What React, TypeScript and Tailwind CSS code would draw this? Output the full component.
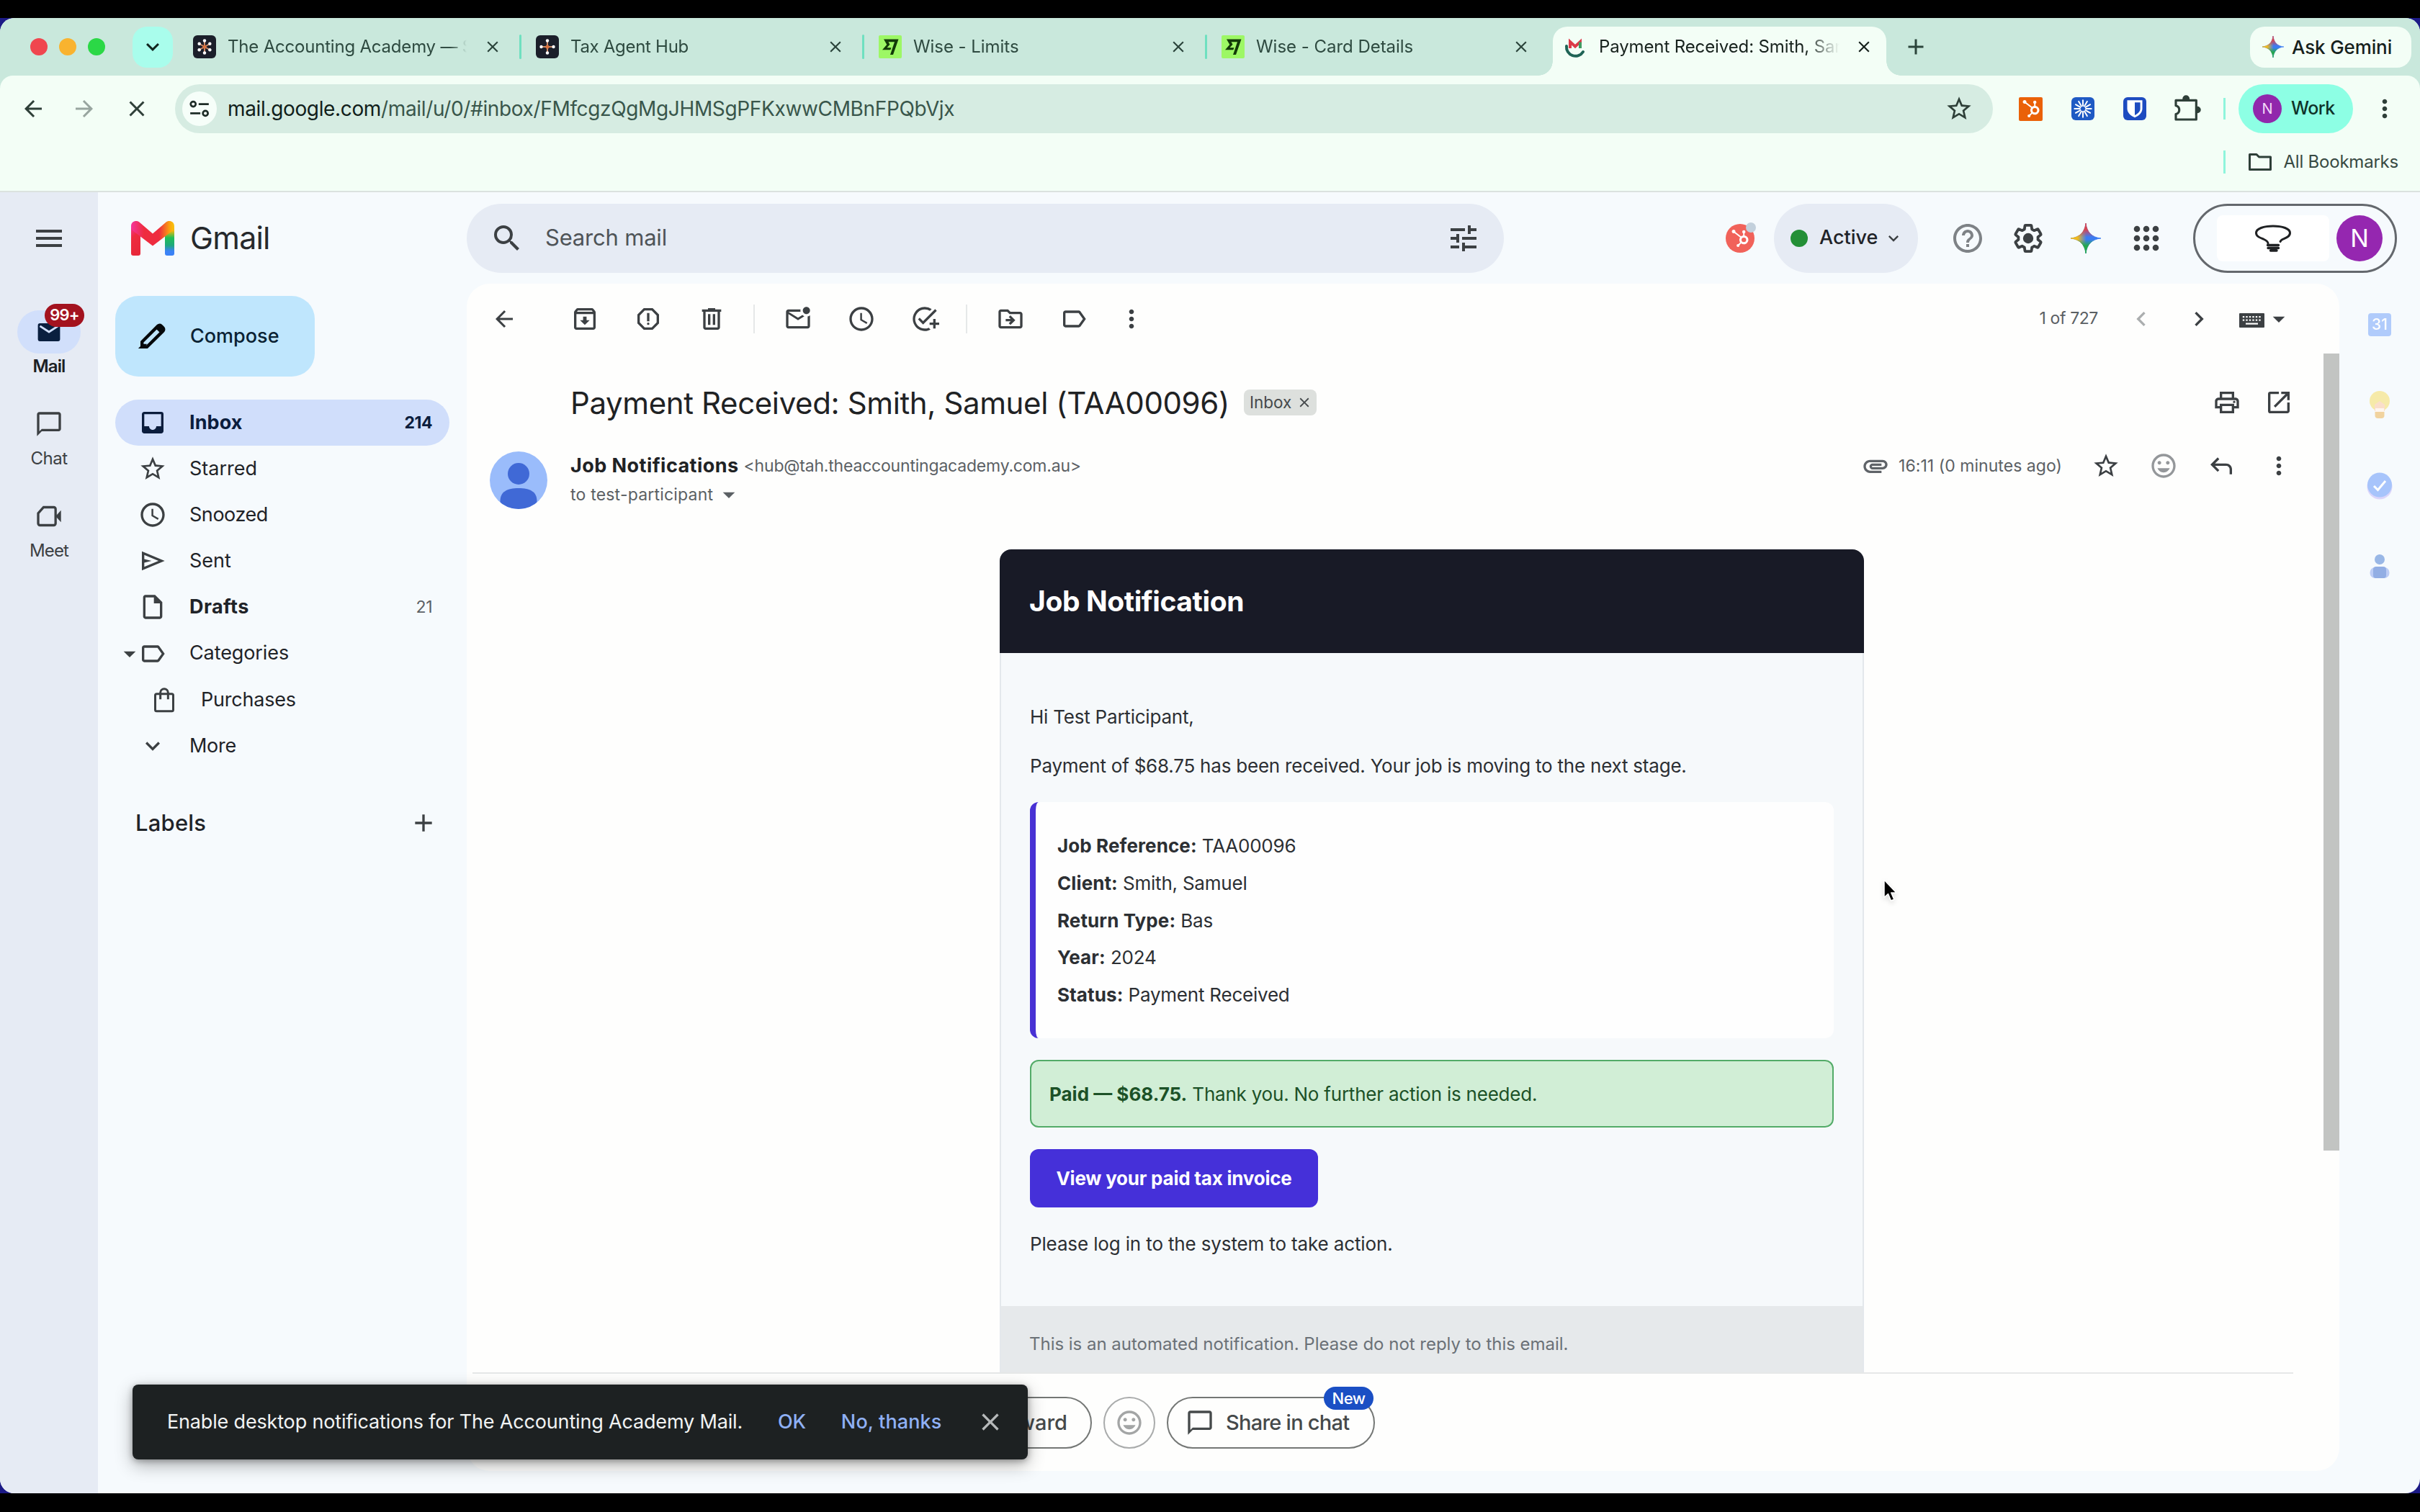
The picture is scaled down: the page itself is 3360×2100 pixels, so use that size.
import React from 'react';
import {
  MdAccessTime,
  MdAdd,
  MdAddTask,
  MdArrowBack,
  MdArrowDropDown,
  MdArrowForward,
  MdAttachment,
  MdChatBubbleOutline,
  MdChevronLeft,
  MdChevronRight,
  MdClose,
  MdExpandMore,
  MdHelpOutline,
  MdInbox,
  MdLabelOutline,
  MdMenu,
  MdMood,
  MdMoreVert,
  MdOpenInNew,
  MdOutlineArchive,
  MdOutlineDriveFileMove,
  MdOutlineInsertDriveFile,
  MdOutlineMarkEmailUnread,
  MdOutlinePrint,
  MdOutlineReport,
  MdSearch,
  MdStarBorder,
  MdTune,
} from 'react-icons/md';
import { SiHubspot } from 'react-icons/si';

/* ---------- drawn icons ---------- */

function Spark({ className, id }: { className: string; id: string }) {
  const star = 'M12 0C12.6 7 17 11.4 24 12C17 12.6 12.6 17 12 24C11.4 17 7 12.6 0 12C7 11.4 11.4 7 12 0Z';
  return (
    <svg viewBox="0 0 24 24" className={className}>
      <defs>
        <linearGradient id={id + 't'} x1="0" y1="0" x2="0" y2="1">
          <stop offset="0.2" stopColor="#d9434f" />
          <stop offset="0.46" stopColor="#d9434f" stopOpacity="0" />
        </linearGradient>
        <linearGradient id={id + 'l'} x1="0" y1="0" x2="1" y2="0">
          <stop offset="0.22" stopColor="#f3bb1c" />
          <stop offset="0.52" stopColor="#f3bb1c" stopOpacity="0" />
        </linearGradient>
        <linearGradient id={id + 'b'} x1="0" y1="1" x2="0" y2="0">
          <stop offset="0.25" stopColor="#23a94c" />
          <stop offset="0.46" stopColor="#23a94c" stopOpacity="0" />
        </linearGradient>
      </defs>
      <path d={star} fill="#3b7cf2" stroke="#3b7cf2" strokeWidth="0.5" />
      <path d={star} fill={`url(#${id}l)`} stroke={`url(#${id}l)`} strokeWidth="0.5" />
      <path d={star} fill={`url(#${id}t)`} stroke={`url(#${id}t)`} strokeWidth="0.5" />
      <path d={star} fill={`url(#${id}b)`} stroke={`url(#${id}b)`} strokeWidth="0.5" />
    </svg>
  );
}

function AgentFavicon({ rays }: { rays: number }) {
  const angles = Array.from({ length: rays }, (_, i) => (i * 2 * Math.PI) / rays - Math.PI / 2);
  return (
    <svg viewBox="0 0 32 32" className="size-8 shrink-0">
      <rect width="32" height="32" rx="6" fill="#1b1f2a" />
      {angles.map((a) => (
        <g key={a}>
          <line x1="16" y1="16" x2={16 + 8 * Math.cos(a)} y2={16 + 8 * Math.sin(a)} stroke="#c98a68" strokeWidth="2" />
          <circle cx={16 + 8.5 * Math.cos(a)} cy={16 + 8.5 * Math.sin(a)} r="2.2" fill="#fff" />
        </g>
      ))}
      <circle cx="16" cy="16" r="2.600" fill="#d9703c" />
    </svg>
  );
}

function WiseFavicon() {
  return (
    <svg viewBox="0 0 32 32" className="size-8 shrink-0">
      <rect width="32" height="32" rx="2" fill="#9df765" />
      <path d="M7 5.500h20.500l-7.500 21.500h-4L22 9.200h-8.500l2 3.600-4 4.500h6l-1.200 3H5l6.300-7.300z" fill="#123a08" />
    </svg>
  );
}

function GmailFavicon() {
  return (
    <svg viewBox="0 0 32 32" className="size-8 shrink-0">
      <path d="M9 18V9l7 6.500L23 9v9" fill="none" stroke="#dc3a48" strokeWidth="4" />
      <path d="M23 18v-8.500" stroke="#3f9b62" strokeWidth="4" />
      <path d="M4 15a12.500 12.500 0 0 0 23 8" fill="none" stroke="#1f6355" strokeWidth="4" strokeLinecap="round" />
    </svg>
  );
}

function GmailLogo() {
  return (
    <svg viewBox="0 0 60 48" className="h-12 w-[60px]">
      <defs>
        <linearGradient id="gmR" x1="0" y1="0" x2="0.3" y2="1">
          <stop offset="0" stopColor="#f5359b" />
          <stop offset="0.4" stopColor="#ee2c3f" />
          <stop offset="1" stopColor="#e8283a" />
        </linearGradient>
        <linearGradient id="gmB" x1="0" y1="0" x2="0" y2="1">
          <stop offset="0.15" stopColor="#f8b70f" />
          <stop offset="0.4" stopColor="#1fbf56" />
          <stop offset="0.65" stopColor="#1ea97c" />
          <stop offset="0.85" stopColor="#3b82f6" />
        </linearGradient>
        <linearGradient id="gmV" x1="0" y1="0" x2="1" y2="0">
          <stop offset="0" stopColor="#f5359b" />
          <stop offset="0.3" stopColor="#ee2c3f" />
          <stop offset="0.65" stopColor="#ee2c3f" />
          <stop offset="0.9" stopColor="#fba60d" />
          <stop offset="1" stopColor="#f8c50f" />
        </linearGradient>
      </defs>
      <path d="M0 7h13v38a3 3 0 0 1-3 3H3a3 3 0 0 1-3-3z" fill="url(#gmR)" />
      <path d="M47 7h13v38a3 3 0 0 1-3 3h-7a3 3 0 0 1-3-3z" fill="url(#gmB)" />
      <path
        d="M0 7C0 0.500 7.500-2 12 2L30 17.500 48 2C52.500-2 60 0.500 60 7C60 10.500 58 13 55.500 15L30 34.500 4.500 15C2 13 0 10.500 0 7Z"
        fill="url(#gmV)"
      />
    </svg>
  );
}

function Gear() {
  return (
    <svg viewBox="0 0 24 24" className="size-12">
      <path
        d="M19.430 12.980c.04-.32.07-.64.07-.98 0-.34-.03-.66-.07-.98l2.110-1.650c.19-.15.24-.42.12-.64l-2-3.460a.5.5 0 0 0-.61-.22l-2.490 1c-.52-.4-1.080-.73-1.690-.98l-.38-2.650A.488.488 0 0 0 14 2h-4c-.25 0-.46.18-.49.42l-.38 2.650c-.61.25-1.170.59-1.690.98l-2.490-1a.5.5 0 0 0-.61.22l-2 3.460c-.13.22-.07.49.12.64l2.110 1.650c-.04.32-.07.65-.07.98 0 .33.03.66.07.98l-2.110 1.650c-.19.15-.24.42-.12.64l2 3.460a.5.5 0 0 0 .61.22l2.490-1c.52.4 1.080.73 1.690.98l.38 2.650c.03.24.24.42.49.42h4c.25 0 .46-.18.49-.42l.38-2.650c.61-.25 1.170-.59 1.690-.98l2.490 1a.5.5 0 0 0 .61-.22l2-3.460c.12-.22.07-.49-.12-.64z"
        fill="none"
        stroke="#3c4043"
        strokeWidth="2.100"
        strokeLinejoin="round"
        transform="translate(1.100 1.100) scale(.908)"
      />
      <circle cx="12" cy="12" r="3.600" fill="#3c4043" />
    </svg>
  );
}

function AppsGrid() {
  return (
    <svg viewBox="0 0 40 40" className="size-10 fill-[#3c4043]">
      {[7, 20, 33].map((x) => [7, 20, 33].map((y) => <circle key={x + '-' + y} cx={x} cy={y} r="4.300" />))}
    </svg>
  );
}

function IdeaBulb() {
  return (
    <svg viewBox="0 0 52 38" className="h-[38px] w-[52px]" fill="none" stroke="#1f2123" strokeWidth="3" strokeLinecap="round">
      <path d="M19 26C19 23.500 17 22 12.500 20C7 17.800 2.500 16 2.500 11.500C2.500 5.500 13 2 26 2S49.500 5.500 49.500 11.500C49.500 17 43 18.800 39 20.500Q37 21.500 36 23.500" />
      <path d="M18.500 28.500h15M19 32.500h14.500M22.500 36h8.500" strokeWidth="3.400" />
    </svg>
  );
}

function Trash() {
  return (
    <svg viewBox="0 0 24 24" className="size-10 fill-current">
      <path d="M15 4V3H9v1H4v2h1v13c0 1.100.9 2 2 2h10c1.100 0 2-.9 2-2V6h1V4h-5zm2 15H7V6h10v13zM9 8h2v9H9zm4 0h2v9h-2z" />
    </svg>
  );
}

function KeyboardIcon() {
  const cols = [6, 10.5, 15, 19.5, 24, 28.5];
  return (
    <svg viewBox="0 0 35 20" className="h-5 w-[35px]">
      <rect width="35" height="20" rx="1" fill="#3c4043" />
      {cols.map((x) => (
        <g key={x} fill="#fefefd">
          <rect x={x - 1.200} y="4" width="2.400" height="2.200" />
          <rect x={x - 1.200} y="8.500" width="2.400" height="2.200" />
        </g>
      ))}
      <rect x="9" y="13.500" width="17" height="2.200" fill="#fefefd" />
    </svg>
  );
}

function ReplyArrow() {
  return (
    <svg viewBox="0 0 24 24" className="size-10 fill-current">
      <path d="M19 19v-4c0-.83-.29-1.540-.88-2.130C17.540 12.290 16.830 12 16 12H6.800l3.600 3.600L9 17l-6-6 6-6 1.400 1.400L6.800 10H16c1.380 0 2.560.49 3.540 1.460C20.510 12.440 21 13.620 21 15v4h-2z" />
    </svg>
  );
}

function SendOutline() {
  return (
    <svg viewBox="0 0 24 24" className="size-10 fill-current">
      <path d="M3 20V4l19 8-19 8zm2-3l11.850-5L5 7v3.500l6 1.500-6 1.500V17z" />
    </svg>
  );
}

function ShoppingBag() {
  return (
    <svg viewBox="0 0 24 24" className="size-10" fill="none" stroke="currentColor" strokeWidth="1.800">
      <rect x="4.500" y="7" width="15" height="14.500" rx="1.200" />
      <path d="M8.800 11.500V6a3.200 3.200 0 0 1 6.400 0v5.500" />
    </svg>
  );
}

function VideoCam() {
  return (
    <svg viewBox="0 0 24 24" className="size-10" fill="none" stroke="currentColor" strokeWidth="2">
      <path d="M3 9.500L7.500 4.500H16a1.500 1.500 0 0 1 1.500 1.500v12A1.500 1.500 0 0 1 16 19.500H4.500A1.500 1.500 0 0 1 3 18z" />
      <path d="M17.500 12L22 7v10z" fill="currentColor" stroke="none" />
    </svg>
  );
}

function ComposePencil() {
  return (
    <svg viewBox="0 0 24 24" className="size-12">
      <path
        d="M5.500 18.500h-.9v-2.600L15.700 4.800a1.500 1.500 0 0 1 2.100 0l1.400 1.400a1.500 1.500 0 0 1 0 2.100L8 19.400H4.600z"
        fill="none"
        stroke="#06090b"
        strokeWidth="2.200"
      />
      <path d="M14 6.500l3-3 3.500 3.500-3 3z" fill="#06090b" />
    </svg>
  );
}

/* ---------- browser chrome ---------- */

const tabs = [
  { title: 'The Accounting Academy — S', icon: <AgentFavicon rays={6} />, tracking: 'tracking-[-0.2px]' },
  { title: 'Tax Agent Hub', icon: <AgentFavicon rays={4} />, tracking: 'tracking-[-0.3px]' },
  { title: 'Wise - Limits', icon: <WiseFavicon />, tracking: 'tracking-[-0.05px]' },
  { title: 'Wise - Card Details', icon: <WiseFavicon />, tracking: 'tracking-[-0.03px]' },
];

function TabStrip() {
  return (
    <div className="flex h-20 items-center bg-[#c9e8dc] pl-[42px]">
      <div className="flex gap-4">
        <span className="size-6 rounded-full bg-[#f0464f]" />
        <span className="size-6 rounded-full bg-[#f9b32f]" />
        <span className="size-6 rounded-full bg-[#2bd846]" />
      </div>
      <div className="ml-[38px] flex h-[57px] w-14 items-center justify-center rounded-[20px] bg-[#a9fdec]">
        <MdExpandMore className="size-9 text-[#10241d]" />
      </div>
      <div className="ml-7 flex">
        {tabs.map((t, i) => (
          <div key={t.title} className="flex w-[476px] items-center text-2xl text-[#2e4a40]">
            {t.icon}
            <span
              className={`ml-4 w-[332px] overflow-hidden whitespace-nowrap [mask-image:linear-gradient(to_right,#000_93%,transparent_100%)] ${t.tracking}`}
            >
              {t.title}
            </span>
            <MdClose className="ml-[23px] size-[26px] text-[#2b443b]" />
            {i < 3 && <span className="ml-6 h-[34px] w-[3px] rounded bg-[#6fe0c0]" />}
          </div>
        ))}
      </div>
      <div className="relative -ml-[16px] flex h-[68px] w-[463px] items-center self-end rounded-t-[20px] bg-[#f3fef6] pb-3 pl-[15px] text-2xl text-[#16211c]">
        <span className="absolute bottom-0 -left-5 size-5 bg-[radial-gradient(circle_at_0_0,transparent_19.5px,#f3fef6_20px)]" />
        <span className="absolute -right-5 bottom-0 size-5 bg-[radial-gradient(circle_at_100%_0,transparent_19.5px,#f3fef6_20px)]" />
        <GmailFavicon />
        <span className="ml-[17px] w-[334px] overflow-hidden tracking-[-0.12px] whitespace-nowrap [mask-image:linear-gradient(to_right,#000_86%,transparent_100%)]">
          Payment Received: Smith, Samuel
        </span>
        <MdClose className="ml-[21px] size-[26px] text-[#16211c]" />
      </div>
      <MdAdd className="ml-[23px] size-9 text-[#2b443b]" />
      <div className="mr-3 ml-auto flex h-[57px] w-56 items-center rounded-[20px] bg-[#f3fef6] pl-[17px]">
        <Spark id="ask" className="size-[30px]" />
        <span className="ml-[11px] text-[26px] font-medium tracking-[-0.13px] whitespace-nowrap text-[#16211c]">Ask Gemini</span>
      </div>
    </div>
  );
}

function Toolbar() {
  return (
    <div className="flex h-[92px] items-center rounded-t-[18px] bg-[#f3fef6] pl-[28px] text-[#2e3f38]">
      <MdArrowBack className="size-9" />
      <MdArrowForward className="ml-[35px] size-9 text-[#98a59f]" />
      <MdClose className="ml-[37px] size-9" />
      <div className="ml-[35px] flex h-[68px] w-[2524px] items-center rounded-full bg-[#d6ece2]">
        <span className="ml-2.5 flex size-12 items-center justify-center rounded-full bg-[#f6fef9]">
          <svg viewBox="0 0 24 24" className="size-7" fill="none" stroke="#1d2b26" strokeWidth="2.300">
            <circle cx="4.500" cy="6.500" r="3" />
            <path d="M11 6.500h12M1 17.500h12" />
            <circle cx="19" cy="17.500" r="3" />
          </svg>
        </span>
        <span className="ml-[15px] text-[28px] tracking-[-0.35px] whitespace-nowrap text-[#39564b]">
          <span className="text-[#10201a]">mail.google.com</span>/mail/u/0/#inbox/FMfcgzQgMgJHMSgPFKxwwCMBnFPQbVjx
        </span>
        <MdStarBorder className="mr-[27px] ml-auto size-10" />
      </div>
      <span className="ml-9 flex size-[33px] items-center justify-center rounded-xs bg-[#ea6108]">
        <SiHubspot className="size-6 text-white" />
      </span>
      <span className="ml-10 flex size-8 items-center justify-center rounded-md bg-[#1f5ac4]">
        <svg viewBox="0 0 24 24" className="size-7" stroke="#fff" strokeWidth="1.700" strokeLinecap="round">
          {Array.from({ length: 12 }, (_, i) => (
            <line key={i} x1="12" y1="2" x2="12" y2="8.500" transform={`rotate(${i * 30} 12 12)`} />
          ))}
        </svg>
      </span>
      <span className="ml-10 flex size-8 items-center justify-center rounded-md bg-[#1d4bc0]">
        <svg viewBox="0 0 24 24" className="size-7">
          <path d="M3 2h18v10c0 5-4.500 8.500-9 10.500C7.500 20.500 3 17 3 12z" fill="#fff" />
          <path d="M12 4.500h6.500V12c0 3.500-3 6-6.500 7.800z" fill="#1d4bc0" />
        </svg>
      </span>
      <svg viewBox="0 0 24 24" className="ml-9 size-10" fill="none" stroke="currentColor" strokeWidth="1.900" strokeLinejoin="round">
        <path d="M3 5h17v16H3v-4.500c3.800-1 3.800-6 0-7z" />
        <path d="M9.500 5V3.700a2 2 0 0 1 4 0V5zM20.500 11h.5a1.800 1.800 0 0 1 0 3.800h-.5z" fill="currentColor" />
      </svg>
      <span className="ml-[31px] h-[30px] w-[3px] bg-[#8ff5dc]" />
      <div className="ml-[18px] flex h-[68px] w-[159px] items-center rounded-full bg-[#8dffe4] pl-5">
        <span className="flex size-10 items-center justify-center rounded-full bg-[#9127ac] text-[20px] text-[#f3d9f8]">N</span>
        <span className="ml-[13px] text-[25px] font-medium tracking-[-0.6px] text-[#0f3329]">Work</span>
      </div>
      <MdMoreVert className="ml-6 size-10" />
    </div>
  );
}

function BookmarksBar() {
  return (
    <div className="flex h-[70px] items-start justify-end border-b-2 border-[#dbe2df] bg-[#f3fef6] pt-3 pr-[30px] text-[#2e3f38]">
      <div className="flex h-8 items-center">
        <span className="h-8 w-[3px] bg-[#8ff5dc]" />
        <svg viewBox="0 0 32 26" className="ml-8 h-[26px] w-8" fill="none" stroke="currentColor" strokeWidth="3" strokeLinejoin="round">
          <path d="M1.500 23.500V2.500h9.500l3.500 3.500h16v17.500z" />
        </svg>
        <span className="ml-[17px] text-2xl tracking-[-0.22px] whitespace-nowrap text-[#384a43]">All Bookmarks</span>
      </div>
    </div>
  );
}

/* ---------- mail app ---------- */

function AppRail() {
  return (
    <nav className="flex w-[136px] shrink-0 flex-col items-center bg-[#e6ebf4] text-2xl text-[#3c4043]">
      <div className="flex h-32 items-center">
        <MdMenu className="size-12" />
      </div>
      <div className="mt-[36px] flex w-full flex-col items-center">
        <div className="relative flex h-[60px] w-[88px] items-center justify-center rounded-full bg-[#d1dffb]">
          <svg viewBox="0 0 32 26" className="h-[25px] w-8">
            <rect width="32" height="26" rx="3" fill="#0a1f3f" />
            <path d="M3 4l13 8.500L29 4" fill="none" stroke="#d1dffb" strokeWidth="3" />
          </svg>
          <span className="absolute -top-[9px] left-[38px] flex h-8 w-[55px] items-center justify-center rounded-full bg-[#a3121f] text-[22px] font-semibold tracking-[-0.8px] text-white">
            99+
          </span>
        </div>
        <span className="flex h-9 items-center font-semibold tracking-[-0.87px] text-[#1c2024]">Mail</span>
      </div>
      <div className="mt-8 flex flex-col items-center">
        <span className="flex h-[60px] items-center">
          <MdChatBubbleOutline className="size-10" />
        </span>
        <span className="flex h-9 items-center tracking-[-0.5px]">Chat</span>
      </div>
      <div className="mt-8 flex flex-col items-center">
        <span className="flex h-[60px] items-center">
          <VideoCam />
        </span>
        <span className="flex h-9 items-center tracking-[-0.85px]">Meet</span>
      </div>
    </nav>
  );
}

function FolderRow({
  icon,
  label,
  count,
  bold,
  active,
  tracking,
}: {
  icon: React.ReactNode;
  label: string;
  count?: string;
  bold?: boolean;
  active?: boolean;
  tracking: string;
}) {
  return (
    <div className={`flex h-16 items-center rounded-full pr-6 pl-8 ${active ? 'bg-[#d0defb] text-[#0b1d3d]' : 'text-[#3c4043]'}`}>
      {icon}
      <span className={`ml-[31px] text-[27px] ${tracking} ${bold ? 'font-bold' : ''} ${active ? '' : 'text-[#1f2328]'}`}>{label}</span>
      {count && (
        <span className={`ml-auto text-[23px] tracking-[-0.5px] ${active ? 'font-bold' : 'text-[#5b6065]'}`}>{count}</span>
      )}
    </div>
  );
}

function Sidebar() {
  return (
    <aside className="w-[512px] shrink-0 pl-6">
      <div className="mt-[17px] flex h-28 w-[277px] items-center rounded-[32px] bg-[#bfe6fd] pl-7">
        <ComposePencil />
        <span className="ml-[28px] text-[27px] font-medium tracking-[0px] text-[#0a2233]">Compose</span>
      </div>
      <div className="mt-8 w-[464px]">
        <FolderRow icon={<MdInbox className="size-10" />} label="Inbox" count="214" bold active tracking="tracking-[0.1px]" />
        <FolderRow icon={<MdStarBorder className="size-10" />} label="Starred" tracking="tracking-[0px]" />
        <FolderRow icon={<MdAccessTime className="size-10" />} label="Snoozed" tracking="tracking-[-0.45px]" />
        <FolderRow icon={<SendOutline />} label="Sent" tracking="tracking-[0px]" />
        <FolderRow icon={<MdOutlineInsertDriveFile className="size-10" />} label="Drafts" count="21" bold tracking="tracking-[0.4px]" />
        <div className="flex h-[65px] items-center text-[#3c4043]">
          <MdArrowDropDown className="size-10 -mr-1" />
          <MdLabelOutline className="-ml-1 size-10" />
          <span className="ml-[31px] text-[27px] tracking-[-0.1px] text-[#1f2328]">Categories</span>
        </div>
        <div className="flex h-16 items-center pl-12 text-[#3c4043]">
          <ShoppingBag />
          <span className="ml-[31px] text-[27px] tracking-[-0.2px] text-[#1f2328]">Purchases</span>
        </div>
        <FolderRow icon={<MdExpandMore className="size-10" />} label="More" tracking="tracking-[-0.3px]" />
      </div>
      <div className="mt-[43px] flex h-16 w-[448px] items-center justify-between pl-7 text-[#1f2328]">
        <span className="text-[31px] font-medium tracking-[0.2px]">Labels</span>
        <MdAdd className="size-10 text-[#3c4043]" />
      </div>
    </aside>
  );
}

function AppHeader() {
  return (
    <header className="flex h-[127px] items-center">
      <div className="flex w-[512px] items-center pl-[46px]">
        <GmailLogo />
        <span className="ml-[22px] text-[43px] tracking-[-0.8px] text-[#26292c]">Gmail</span>
      </div>
      <div className="flex h-24 w-[1440px] items-center rounded-full bg-[#e6ebf4] pl-8 text-[#3c4043]">
        <MdSearch className="size-12" />
        <span className="ml-[29px] text-[31px] tracking-[-0.2px] text-[#4f5458]">Search mail</span>
        <MdTune className="mr-8 ml-auto size-12" />
      </div>
      <span className="relative ml-[308px] flex size-10 items-center justify-center rounded-full bg-[#f1625a]">
        <SiHubspot className="size-6 text-white" />
        <span className="absolute -top-0.5 -right-0.5 size-3.5 rounded-full bg-[#c3d0dc]" />
      </span>
      <div className="ml-[27px] flex h-24 w-[200px] items-center rounded-full bg-[#e6ebf4] pl-[23px]">
        <span className="size-6 rounded-full bg-[#238f36]" />
        <span className="ml-4 text-[27px] font-medium tracking-[0px] text-[#1f2328]">Active</span>
        <MdExpandMore className="ml-2 size-7 text-[#3c4043]" />
      </div>
      <MdHelpOutline className="ml-[45px] size-12 text-[#7e8286]" />
      <span className="ml-9">
        <Gear />
      </span>
      <Spark id="hdr" className="ml-[35px] size-[42px]" />
      <span className="ml-[43px]">
        <AppsGrid />
      </span>
      <div className="ml-[45px] flex h-24 w-[283px] items-center rounded-full border-[3px] border-[#64686d] pl-[30px]">
        <span className="flex h-16 w-[156px] items-center justify-center rounded-lg bg-white">
          <IdeaBulb />
        </span>
        <span className="ml-[10px] flex size-16 items-center justify-center rounded-full bg-[#9527b0] text-[34px] text-white">N</span>
      </div>
    </header>
  );
}

function MessageToolbar() {
  return (
    <div className="flex h-[97px] shrink-0 items-center pr-16 pl-8 text-[#3c4043]">
      <MdArrowBack className="size-10 p-0.5" />
      <MdOutlineArchive className="ml-[72px] size-10" />
      <MdOutlineReport className="ml-12 size-10" />
      <span className="ml-12">
        <Trash />
      </span>
      <span className="ml-[38px] h-10 w-0.5 bg-[#e6e8e8]" />
      <MdOutlineMarkEmailUnread className="ml-10 size-10" />
      <MdAccessTime className="ml-12 size-10" />
      <MdAddTask className="ml-12 size-10" />
      <span className="ml-[37px] h-10 w-0.5 bg-[#e6e8e8]" />
      <MdOutlineDriveFileMove className="ml-10 size-10" />
      <MdLabelOutline className="ml-12 size-10" />
      <MdMoreVert className="ml-10 size-10" />
      <span className="ml-auto text-[23px] tracking-[-0.4px] text-[#5b6064]">1 of 727</span>
      <MdChevronLeft className="ml-10 size-10 text-[#abaeaf]" />
      <MdChevronRight className="ml-10 size-10" />
      <span className="mt-[5px] ml-9">
        <KeyboardIcon />
      </span>
      <MdArrowDropDown className="size-10" />
    </div>
  );
}

function SenderRow() {
  return (
    <div className="flex h-20 pr-[42px] pl-8">
      <svg viewBox="0 0 80 80" className="size-20 shrink-0">
        <clipPath id="avatarClip">
          <circle cx="40" cy="40" r="40" />
        </clipPath>
        <g clipPath="url(#avatarClip)">
          <rect width="80" height="80" fill="#9abcfb" />
          <circle cx="40" cy="31" r="15" fill="#4069d6" />
          <path d="M14.500 80V69C14.500 56 24 51 40 51S65.500 56 65.500 69V80Z" fill="#4069d6" />
        </g>
      </svg>
      <div className="ml-8 flex flex-col">
        <div className="flex h-10 items-center whitespace-nowrap">
          <span className="text-[27px] font-bold tracking-[0.45px] text-[#1f2224]">Job Notifications</span>
          <span className="ml-[7px] text-[23px] tracking-[-0.2px] text-[#5b6064]">&lt;hub@tah.theaccountingacademy.com.au&gt;</span>
        </div>
        <div className="flex h-10 items-center text-[23px] tracking-[0.2px] whitespace-nowrap text-[#5b6064]">
          to test-participant
          <MdArrowDropDown className="ml-0.5 size-10" />
        </div>
      </div>
      <div className="ml-auto flex h-10 items-center text-[#3c4043]">
        <MdAttachment className="size-10 text-[#5f6368]" />
        <span className="ml-[12px] text-[23px] tracking-[0.05px] whitespace-nowrap text-[#5b6064]">16:11 (0 minutes ago)</span>
        <MdStarBorder className="ml-[41px] size-10" />
        <MdMood className="ml-10 size-10 text-[#94979a]" />
        <span className="ml-10">
          <ReplyArrow />
        </span>
        <MdMoreVert className="ml-10 size-10" />
      </div>
    </div>
  );
}

const details = [
  ['Job Reference:', 'TAA00096'],
  ['Client:', 'Smith, Samuel'],
  ['Return Type:', 'Bas'],
  ['Year:', '2024'],
  ['Status:', 'Payment Received'],
];

function EmailCard() {
  return (
    <div className="mt-14 ml-[740px] w-[1200px] text-[26px] tracking-[-0.22px] text-[#2c2f33]">
      <div className="flex h-36 items-center rounded-t-2xl bg-[#181a26] pl-[41px] text-[39px] font-bold tracking-[-0.4px] text-white">
        Job Notification
      </div>
      <div className="h-[907px] border-x-2 border-[#e4e8ec] bg-[#f6f9fb] px-10 pt-[68px]">
        <p className="h-[42px] leading-[42px]">Hi Test Participant,</p>
        <p className="mt-[26px] h-[42px] leading-[42px] whitespace-nowrap">
          Payment of $68.75 has been received. Your job is moving to the next stage.
        </p>
        <div className="mt-[29px] h-[328px] rounded-xl border-l-8 border-[#4831d4] bg-[#fefefe] pt-[35px] pl-[30px]">
          {details.map(([k, v]) => (
            <p key={k} className="h-[51.75px] leading-[51.75px]">
              <b className="tracking-[0.1px]">{k}</b> {v}
            </p>
          ))}
        </div>
        <div className="mt-[30px] flex h-[94px] items-center rounded-xl border-2 border-[#53ab68] bg-[#d1eed6] pl-[25px] whitespace-pre text-[#1c5127]">
          <b className="tracking-[0px]">Paid — $68.75.</b> Thank you. No further action is needed.
        </div>
        <div className="mt-[30px] flex h-[81px] w-[400px] items-center justify-center rounded-xl bg-[#4530d9] font-bold whitespace-nowrap text-white">
          View your paid tax invoice
        </div>
        <p className="mt-[30px] h-[42px] leading-[42px] tracking-[-0.14px]">Please log in to the system to take action.</p>
      </div>
      <div className="h-[110px] border-x-2 border-[#e4e8ec] bg-[#e6e9eb] pt-[33px] pl-[39px] text-2xl leading-10 tracking-[-0.02px] text-[#6b7177]">
        This is an automated notification. Please do not reply to this email.
      </div>
    </div>
  );
}

function MessagePane() {
  return (
    <main className="flex h-[1649px] w-[2600px] flex-col overflow-hidden rounded-[32px] bg-[#fefefd]">
      <MessageToolbar />
      <div className="flex h-[1415px] shrink-0 overflow-hidden">
        <div className="w-[2578px]">
          <div className="flex h-[136px] items-center pr-[42px] pl-36 text-[#3c4043]">
            <h1 className="text-[42px] tracking-[-0.38px] whitespace-nowrap text-[#1f2224]">
              Payment Received: Smith, Samuel (TAA00096)
            </h1>
            <span className="ml-5 flex h-9 w-[101px] items-center rounded-lg bg-[#dde0dd] pl-2 text-[22.500px] text-[#45494b]">
              Inbox
              <MdClose className="ml-[7px] size-[22px]" />
            </span>
            <MdOutlinePrint className="ml-auto size-10" />
            <MdOpenInNew className="ml-8 size-10" />
          </div>
          <SenderRow />
          <EmailCard />
        </div>
        <div className="h-[1107px] w-[22px] bg-[#c2c4c2]" />
      </div>
      <div className="mr-16 ml-2 h-0.5 shrink-0 bg-[#e6e8e8]" />
      <div className="mt-8 flex h-[72px] text-[29px] font-medium text-[#45494a]">
        <div className="ml-[630px] flex w-[238px] items-center justify-end rounded-full border-2 border-[#747775] pr-8">Forward</div>
        <div className="ml-4 flex w-[72px] items-center justify-center rounded-full border-2 border-[#a9abab]">
          <MdMood className="size-10 text-[#a3a5a5]" />
        </div>
        <div className="relative ml-4 flex w-[289px] items-center rounded-full border-2 border-[#747775] pl-6">
          <MdChatBubbleOutline className="size-10" />
          <span className="ml-[16px] tracking-[-0.75px] whitespace-nowrap">Share in chat</span>
          <span className="absolute -top-4 right-0 flex h-8 w-[69px] items-center justify-center rounded-full bg-[#1a4fc4] text-[22px] font-medium tracking-[-0.5px] text-white">
            New
          </span>
        </div>
      </div>
    </main>
  );
}

function SidePanel() {
  return (
    <aside className="flex w-28 flex-col items-center gap-[72px] pt-[37px] opacity-90">
      <span className="flex size-10 items-center justify-center">
        <span className="flex size-8 items-center justify-center rounded-sm bg-[#a9c6fb] text-[21px] font-medium text-white">31</span>
      </span>
      <svg viewBox="0 0 40 40" className="size-10">
        <circle cx="20" cy="14" r="14" fill="#f7e9a0" />
        <path d="M13 19l7-5 7 5v9H13z" fill="#fbdcc5" />
        <rect x="14" y="24" width="12" height="5" fill="#fff6ee" />
        <path d="M13.500 29h13v5a4 4 0 0 1-4 4h-5a4 4 0 0 1-4-4z" fill="#f1cf95" />
      </svg>
      <svg viewBox="0 0 40 40" className="size-10">
        <circle cx="20" cy="21" r="17.500" fill="#d9d2fa" />
        <circle cx="20" cy="18.500" r="17" fill="#9fbffb" />
        <path d="M12 20l5.500 5.500L28 13" fill="none" stroke="#fff" strokeWidth="3" />
      </svg>
      <svg viewBox="0 0 40 40" className="size-10">
        <circle cx="20" cy="10" r="7" fill="#8fb0e4" />
        <rect x="6.500" y="21" width="27" height="15" rx="7" fill="#b7c9f5" />
        <rect x="11" y="20" width="18" height="16" rx="4" fill="#88a6e2" />
      </svg>
    </aside>
  );
}

function Toast() {
  return (
    <div className="absolute top-[1898px] left-[184px] flex h-[104px] w-[1243px] items-center rounded-lg bg-[#1d2122] pl-12 text-[27px] whitespace-nowrap shadow-[0_8px_24px_rgba(0,0,0,0.3),0_2px_8px_rgba(0,0,0,0.3)]">
      <span className="tracking-[-0.17px] text-[#f1f3f3]">Enable desktop notifications for The Accounting Academy Mail.</span>
      <span className="ml-[49px] font-medium tracking-[-0.2px] text-[#8fb0f4]">OK</span>
      <span className="ml-[49px] font-medium tracking-[0.1px] text-[#8fb0f4]">No, thanks</span>
      <MdClose className="mr-8 ml-auto size-10 text-[#b6b9ba]" />
    </div>
  );
}

export default function App() {
  return (
    <div className="h-[2100px] w-[3360px] overflow-hidden bg-black pt-[25px] font-['Inter','Liberation_Sans',sans-serif]">
      <div className="h-[2049px] bg-[#1c1a86]">
        <div className="relative flex h-full flex-col overflow-hidden rounded-[20px] bg-[#f6fafd]">
          <TabStrip />
          <div className="bg-[#c9e8dc]">
            <Toolbar />
          </div>
          <BookmarksBar />
          <div className="flex grow">
            <AppRail />
            <div className="grow">
              <AppHeader />
              <div className="flex">
                <Sidebar />
                <MessagePane />
                <SidePanel />
              </div>
            </div>
          </div>
          <Toast />
          <svg viewBox="0 0 24 36" className="absolute top-[1195px] left-[2613px] h-9 w-6 drop-shadow-md">
            <path
              d="M3 2v24.500l5.500-5 4 9.500 4.300-1.800-4-9.200H20z"
              fill="#000"
              stroke="#fff"
              strokeWidth="1.500"
              strokeLinejoin="round"
            />
          </svg>
        </div>
      </div>
    </div>
  );
}
